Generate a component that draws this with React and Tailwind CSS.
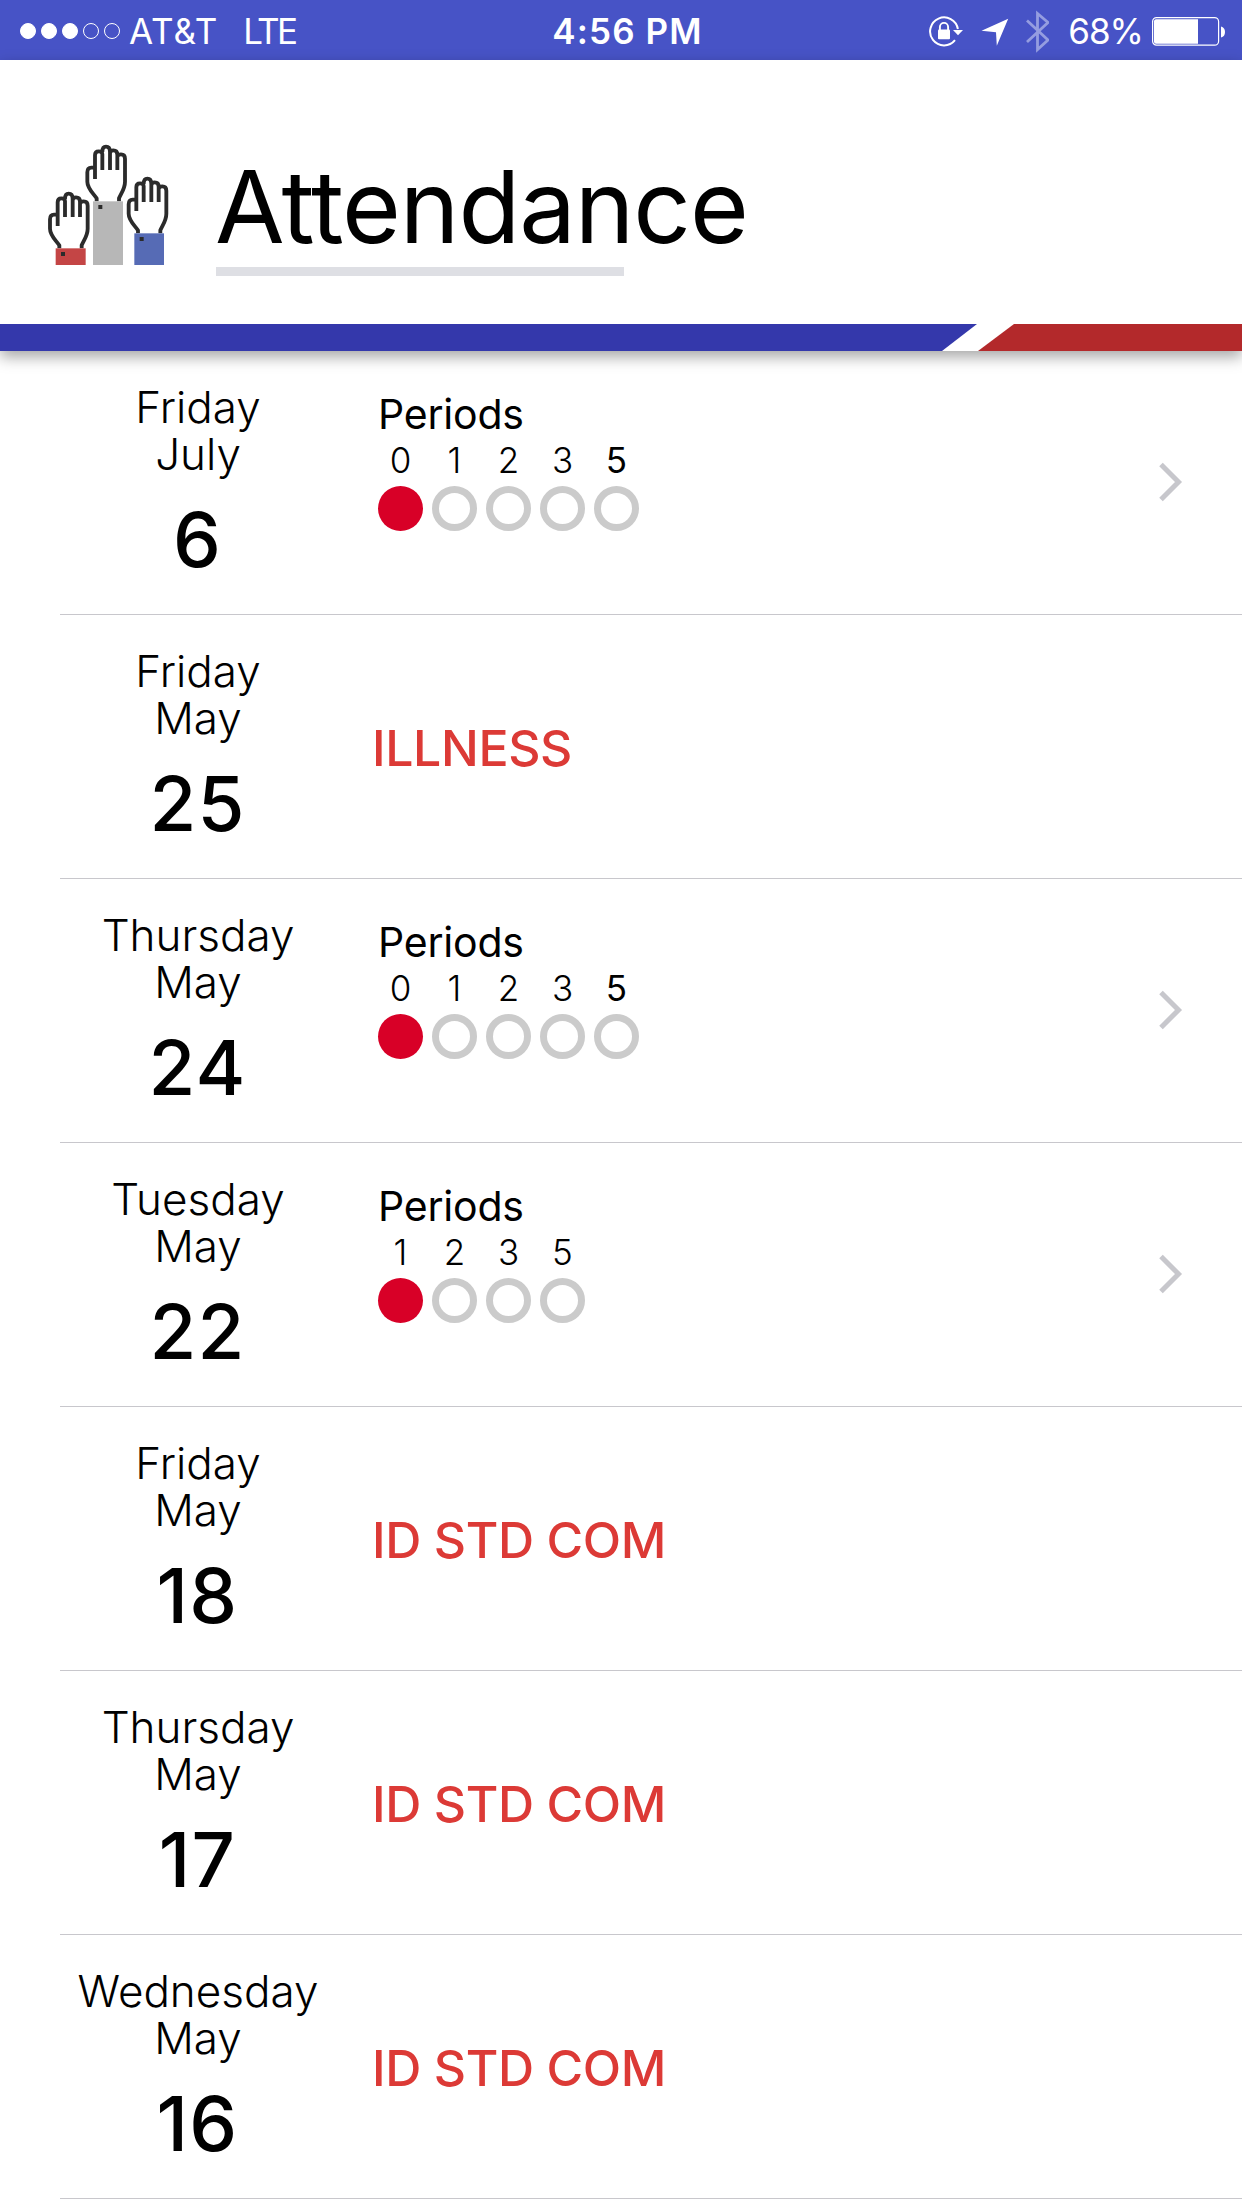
import React from 'react';

const days = [
  { weekday: 'Friday', month: 'July', day: 6, periods: [0, 1, 2, 3, 5] },
  { weekday: 'Friday', month: 'May', day: 25, reason: 'ILLNESS' },
  { weekday: 'Thursday', month: 'May', day: 24, periods: [0, 1, 2, 3, 5] },
  { weekday: 'Tuesday', month: 'May', day: 22, periods: [1, 2, 3, 5] },
  { weekday: 'Friday', month: 'May', day: 18, reason: 'ID STD COM' },
  { weekday: 'Thursday', month: 'May', day: 17, reason: 'ID STD COM' },
  { weekday: 'Wednesday', month: 'May', day: 16, reason: 'ID STD COM' },
];

const StatusBar = () => (
  <div className="h-[60px] bg-[#4753c6] text-white text-[35px] leading-[59px] grid grid-cols-3 items-center pl-5 pr-[17px]">
    <div className="flex items-center">
      <div className="flex gap-[5px]">
        {[0, 1, 2, 3, 4].map((i) => (
          <span
            key={i}
            className={`w-4 h-4 rounded-full border border-white ${i < 3 ? 'bg-white' : ''}`}
          ></span>
        ))}
      </div>
      <span className="ml-[9px] pt-0.5 tracking-[0.9px]">AT&amp;T</span>
      <span className="ml-[25px] pt-0.5 tracking-[-2.7px]">LTE</span>
    </div>

    <div className="text-center font-semibold tracking-[1.1px] pt-px pl-2.5">4:56 PM</div>

    <div className="flex items-center justify-end">
      {/* Rotation lock, location and bluetooth */}
      <svg className="w-[120px] h-[60px] shrink-0" viewBox="0 0 120 60" fill="none">
        <path d="M26 39.2 A14 14 0 1 1 28.9 28" stroke="#fff" strokeWidth="2" />
        <path d="M24 29 H34 L29 34.3 Z" fill="#fff" />
        <rect x="9" y="28.6" width="12" height="9.6" rx="1" fill="#fff" />
        <path d="M10.9 29 V26 a4.1 4.1 0 0 1 8.2 0 V29" stroke="#fff" strokeWidth="1.9" />
        <path d="M79.2 17.8 L52.5 29.8 L67 31.2 L67.8 44.8 Z" fill="#fff" />
        <path d="M98 19.5 L119 39 L108.5 48.5 V12.5 L119 21.5 L98 41" stroke="#959de0" strokeWidth="2.8" />
      </svg>
      <span className="ml-[19px] pt-0.5 tracking-[-1px]">68%</span>
      <svg className="ml-[9px] w-[73px] h-[60px] shrink-0" viewBox="0 0 73 60" fill="none">
        <rect x="0.6" y="16.6" width="66" height="27.6" rx="4" stroke="#fff" strokeWidth="1.2" />
        <path d="M4 18.3 H46 V42.7 H4 Q2 42.7 2 40.7 V20.3 Q2 18.3 4 18.3 Z" fill="#fff" />
        <path d="M69 25.5 Q73 26.5 73 31 Q73 35.5 69 36.5 Z" fill="#fff" />
      </svg>
    </div>
  </div>
);

const Hand = ({ x, y }) => (
  <g transform={`translate(${x} ${y})`}>
    <path
      d="M200 214 V205 C186 186 172 174 172 155 V127 Q172 113 184 113 H195 M195 147 V76 Q195 64 206 64 Q217 64 217 73 V120 M217 66 Q217 50 228 50 Q240 50 240 66 V120 M240 70 Q241 61 250 61 Q262 61 262 74 V120 M262 80 Q264 73 273 73 Q285 73 285 86 V155 C285 176 274 188 267 205 V214"
      fill="none"
      stroke="#2b2b2b"
      strokeWidth="11.5"
      strokeLinejoin="round"
    />
  </g>
);

const HandsIcon = () => (
  <svg className="w-[160px] h-[150px] shrink-0" viewBox="0 0 480 450">
    <Hand x={-112} y={141} />
    <Hand x={0} y={0} />
    <Hand x={124} y={96} />
    <rect x="77" y="355" width="90" height="50" fill="#c44545" />
    <rect x="189" y="214" width="90" height="191" fill="#b7b7b7" />
    <rect x="313" y="310" width="89" height="95" fill="#566bb5" />
    <rect x="93" y="366" width="12" height="12" fill="#2b2b2b" />
    <rect x="205" y="225" width="12" height="12" fill="#2b2b2b" />
    <rect x="329" y="321" width="12" height="12" fill="#2b2b2b" />
  </svg>
);

const Header = () => (
  <header className="relative z-10 bg-white shadow-[0_6px_14px_rgba(0,0,0,0.35)]">
    <div className="h-[264px] flex pl-[30px] pt-[70px]">
      <HandsIcon />
      <div className="ml-[26px] pt-5">
        <h1 className="-ml-px text-[101px] leading-[112px] tracking-[-1.1px]">Attendance</h1>
        <div className="mt-[5px] w-[408px] h-[9px] bg-[#dedfe4]"></div>
      </div>
    </div>
    <svg className="block w-full h-[27px]" viewBox="0 0 1242 27">
      <path d="M0 0 H977 L942 27 H0 Z" fill="#3438ab" />
      <path d="M1014 0 H1242 V27 H978 Z" fill="#b3292b" />
    </svg>
  </header>
);

const Periods = ({ periods }) => (
  <div className="pt-[41px] pl-[42px]">
    <p className="text-[41px] leading-[44px] tracking-[-0.2px]">Periods</p>
    <div className="flex gap-[9px] mt-1">
      {periods.map((p, i) => (
        <div key={p} className="w-[45px] flex flex-col items-center">
          <span className={`text-[35px] leading-10 ${i === 4 ? 'font-normal' : 'font-light'}`}>{p}</span>
          <span
            className={`mt-1.5 w-[45px] h-[45px] rounded-full ${
              i === 0 ? 'bg-[#d80027]' : 'border-[7px] border-[#cbcbcb]'
            }`}
          ></span>
        </div>
      ))}
    </div>
  </div>
);

const DayRow = ({ item }) => (
  <li className="h-[264px] ml-[60px] flex border-b border-[#c8c7cc]">
    <div className="w-[276px] pt-[33px] text-center">
      <p className="text-[44px] leading-[47px] font-light">{item.weekday}</p>
      <p className="text-[44px] leading-[47px] font-light">{item.month}</p>
      <p className="mt-[23px] pr-px text-[76px] leading-none font-medium tracking-[1.2px]">{item.day}</p>
    </div>
    {item.periods ? (
      <>
        <Periods periods={item.periods} />
        <svg className="ml-auto mr-[59px] mb-0.5 self-center w-6 h-10" viewBox="0 0 24 40" fill="none">
          <path d="M2 2.5 L19.5 20 L2 37.5" stroke="#c7c7cc" strokeWidth="5" />
        </svg>
      </>
    ) : (
      <p className="self-center pt-0.5 pl-9 text-[50px] leading-none font-medium tracking-[-0.4px] text-[#dc3a36]">
        {item.reason}
      </p>
    )}
  </li>
);

export default function App() {
  return (
    <div className="w-[1242px] h-[2208px] overflow-hidden bg-white text-black font-[Inter,sans-serif]">
      <StatusBar />
      <Header />
      <ul>
        {days.map((item) => (
          <DayRow key={`${item.month}-${item.day}`} item={item} />
        ))}
      </ul>
    </div>
  );
}
